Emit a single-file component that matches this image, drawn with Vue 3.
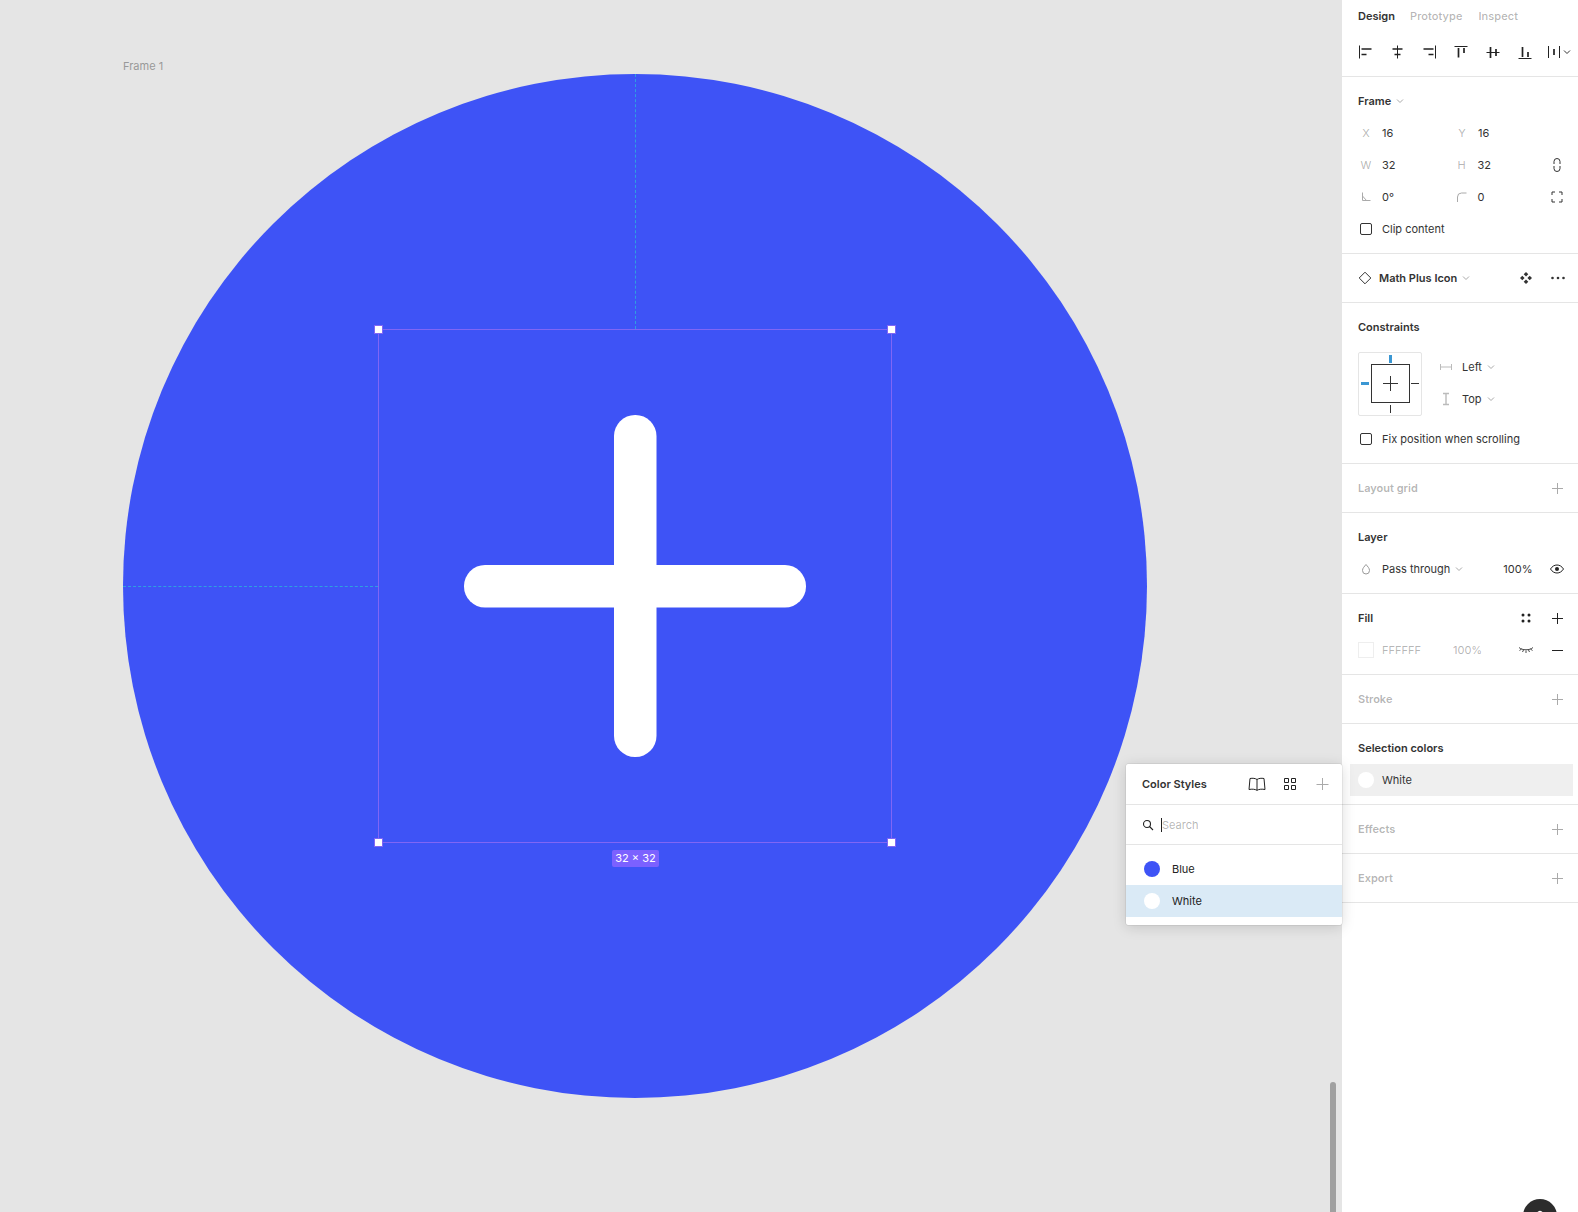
<script setup>
const alignIcons = [
  { line: 'M2.5 1.5v13', bars: 'M4.5 5h10M4.5 10.5h5' },
  { line: 'M8.5 1.5v13', bars: 'M3.5 5h10M5.5 10.5h6' },
  { line: 'M14.5 1.5v13', bars: 'M2.5 5h10M7.5 10.5h5' },
  { line: 'M1.5 2.5h13', bars: 'M5.5 4v9.5M11 4v5' },
  { line: 'M1.5 8.5h13', bars: 'M5.5 3v11M11 5v7' },
  { line: 'M1.5 14.5h13', bars: 'M5.5 3v10M11 8v5' },
]

const emptySections = {
  grid: 'Layout grid',
  stroke: 'Stroke',
  effects: 'Effects',
  exportTo: 'Export',
}
</script>

<template>
  <div class="app">
    <main class="canvas">
      <span class="frame-name">Frame 1</span>
      <div class="circle">
        <svg class="plus-art" viewBox="0 0 512 512">
          <rect x="235" y="85" width="42.5" height="342" rx="21" fill="#fff" />
          <rect x="85" y="235" width="342" height="42.5" rx="21" fill="#fff" />
        </svg>
      </div>
      <i class="guide guide-v"></i>
      <i class="guide guide-h"></i>
      <div class="selection">
        <i class="handle tl"></i>
        <i class="handle tr"></i>
        <i class="handle bl"></i>
        <i class="handle br"></i>
        <span class="size-tag">32 × 32</span>
      </div>
      <div class="scrollbar"></div>
    </main>

    <aside class="panel">
      <section class="section head">
        <div class="tabs">
          <span class="tab active">Design</span>
          <span class="tab tab-proto">Prototype</span>
          <span class="tab tab-inspect">Inspect</span>
        </div>
        <div class="align-row">
          <svg v-for="icon in alignIcons" :key="icon.line" class="align-icon" viewBox="0 0 16 16">
            <path :d="icon.line" fill="none" stroke="#222" />
            <path :d="icon.bars" fill="none" stroke="#222" stroke-width="1.7" />
          </svg>
          <svg class="align-last" viewBox="0 0 26 16">
            <path d="M1.5 2v12M12.5 2v12" fill="none" stroke="#222" />
            <path d="M7 5v6" fill="none" stroke="#222" stroke-width="1.7" />
            <path d="M17 6.5l3 3 3-3" fill="none" stroke="#333" />
          </svg>
        </div>
      </section>

      <section class="section">
        <div class="row title-row">
          <span class="title">Frame</span>
          <svg class="chev" viewBox="0 0 8 8"><path d="M1 2.5l3 3 3-3" /></svg>
        </div>
        <div class="row">
          <div class="cell"><span class="lab">X</span><span class="val">16</span></div>
          <div class="cell"><span class="lab">Y</span><span class="val">16</span></div>
        </div>
        <div class="row">
          <div class="cell"><span class="lab">W</span><span class="val">32</span></div>
          <div class="cell"><span class="lab">H</span><span class="val">32</span></div>
          <svg class="end-icon" viewBox="0 0 16 16">
            <path d="M5 7V4.5a3 3 0 0 1 6 0V7M5 9v2.5a3 3 0 0 0 6 0V9" fill="none" stroke="#333" />
          </svg>
        </div>
        <div class="row">
          <div class="cell">
            <span class="lab">
              <svg class="lab-icon" viewBox="0 0 12 12"><path d="M2.5 1.5v8h8M2.5 5l4 4.5" fill="none" stroke="#aaa" /></svg>
            </span>
            <span class="val">0°</span>
          </div>
          <div class="cell">
            <span class="lab">
              <svg class="lab-icon" viewBox="0 0 12 12"><path d="M1.5 11V6a4 4 0 0 1 4-4h5" fill="none" stroke="#aaa" /></svg>
            </span>
            <span class="val">0</span>
          </div>
          <svg class="end-icon" viewBox="0 0 16 16">
            <path d="M3 6V3h3M10 3h3v3M13 10v3h-3M6 13H3v-3" fill="none" stroke="#333" />
          </svg>
        </div>
        <label class="row">
          <i class="check"></i>
          <span class="val">Clip content</span>
        </label>
      </section>

      <section class="section">
        <div class="row">
          <svg class="diamond" viewBox="0 0 14 14">
            <path d="M7 1.2L12.8 7 7 12.8 1.2 7z" fill="none" stroke="#333" />
          </svg>
          <span class="title comp-name">Math Plus Icon</span>
          <svg class="chev" viewBox="0 0 8 8"><path d="M1 2.5l3 3 3-3" /></svg>
          <svg class="comp-actions" viewBox="0 0 16 16" fill="#333">
            <path d="M8 2L10.3 4.3 8 6.6 5.700 4.3zM8 9.400L10.300 11.700 8 14 5.700 11.700zM4.300 5.700L6.600 8 4.300 10.300 2 8zM11.700 5.700L14 8 11.700 10.300 9.400 8z" />
          </svg>
          <svg class="end-icon more" viewBox="0 0 16 16" fill="#333">
            <circle cx="2.5" cy="8" r="1.3" /><circle cx="8" cy="8" r="1.3" /><circle cx="13.5" cy="8" r="1.3" />
          </svg>
        </div>
      </section>

      <section class="section">
        <div class="row"><span class="title">Constraints</span></div>
        <div class="constraints">
          <div class="cons-box">
            <i class="pin pin-top on"></i>
            <i class="pin pin-left on"></i>
            <i class="pin pin-right"></i>
            <i class="pin pin-bottom"></i>
            <div class="cons-inner">
              <svg viewBox="0 0 15 15"><path d="M7.5 0v15M0 7.5h15" stroke="#333" /></svg>
            </div>
          </div>
          <div class="cons-opts">
            <div class="cons-opt">
              <svg class="cons-icon" viewBox="0 0 14 14"><path d="M1.5 4v6M12.5 4v6M2 7h10" fill="none" stroke="#bbb" /></svg>
              <span class="val">Left</span>
              <svg class="chev" viewBox="0 0 8 8"><path d="M1 2.5l3 3 3-3" /></svg>
            </div>
            <div class="cons-opt">
              <svg class="cons-icon" viewBox="0 0 14 14"><path d="M4 1.5h6M4 12.5h6M7 2v10" fill="none" stroke="#bbb" stroke-width="1.4" /></svg>
              <span class="val">Top</span>
              <svg class="chev" viewBox="0 0 8 8"><path d="M1 2.5l3 3 3-3" /></svg>
            </div>
          </div>
        </div>
        <label class="row">
          <i class="check"></i>
          <span class="val">Fix position when scrolling</span>
        </label>
      </section>

      <section class="section">
        <div class="row">
          <span class="title muted">{{ emptySections.grid }}</span>
          <svg class="end-icon" viewBox="0 0 16 16"><path d="M8.5 3v11M3 8.5h11" stroke="#aaa" /></svg>
        </div>
      </section>

      <section class="section">
        <div class="row"><span class="title">Layer</span></div>
        <div class="row">
          <span class="lab">
            <svg class="lab-icon" viewBox="0 0 12 12"><path d="M6 1.5C7.500 3.500 9.500 5 9.500 7.500a3.500 3.500 0 0 1-7 0C2.500 5 4.500 3.500 6 1.500z" fill="none" stroke="#999" /></svg>
          </span>
          <span class="val">Pass through</span>
          <svg class="chev" viewBox="0 0 8 8"><path d="M1 2.5l3 3 3-3" /></svg>
          <span class="val layer-opacity">100%</span>
          <svg class="end-icon" viewBox="0 0 16 16">
            <path d="M1.500 8C3.200 5.300 5.400 4 8 4s4.800 1.300 6.500 4c-1.700 2.700-3.900 4-6.500 4s-4.800-1.300-6.500-4z" fill="none" stroke="#222" />
            <circle cx="8" cy="8" r="2" fill="#222" />
          </svg>
        </div>
      </section>

      <section class="section">
        <div class="row">
          <span class="title">Fill</span>
          <svg class="style-icon" viewBox="0 0 16 16" fill="#222">
            <circle cx="5" cy="5" r="1.5" /><circle cx="11" cy="5" r="1.5" /><circle cx="5" cy="11" r="1.5" /><circle cx="11" cy="11" r="1.5" />
          </svg>
          <svg class="end-icon" viewBox="0 0 16 16"><path d="M8.5 3v11M3 8.5h11" stroke="#222" /></svg>
        </div>
        <div class="row">
          <i class="swatch"></i>
          <span class="val faded">FFFFFF</span>
          <span class="val faded fill-opacity">100%</span>
          <svg class="eye-closed" viewBox="0 0 16 16">
            <path d="M1 5.500C4 8.500 12 8.500 15 5.500M3.500 7l-2 1.500M8 8.500v2.500M12.500 7l2 1.500M5.500 8l-1 2M10.500 8l1 2" fill="none" stroke="#333" stroke-width=".9" />
          </svg>
          <svg class="end-icon" viewBox="0 0 16 16"><path d="M3 8.500h11" stroke="#222" /></svg>
        </div>
      </section>

      <section class="section">
        <div class="row">
          <span class="title muted">{{ emptySections.stroke }}</span>
          <svg class="end-icon" viewBox="0 0 16 16"><path d="M8.5 3v11M3 8.5h11" stroke="#aaa" /></svg>
        </div>
      </section>

      <section class="section">
        <div class="row"><span class="title">Selection colors</span></div>
        <div class="sel-color">
          <i class="dot"></i>
          <span class="val">White</span>
        </div>
      </section>

      <section class="section">
        <div class="row">
          <span class="title muted">{{ emptySections.effects }}</span>
          <svg class="end-icon" viewBox="0 0 16 16"><path d="M8.5 3v11M3 8.5h11" stroke="#aaa" /></svg>
        </div>
      </section>

      <section class="section">
        <div class="row">
          <span class="title muted">{{ emptySections.exportTo }}</span>
          <svg class="end-icon" viewBox="0 0 16 16"><path d="M8.5 3v11M3 8.5h11" stroke="#aaa" /></svg>
        </div>
      </section>
    </aside>

    <div class="styles-pop">
      <header class="pop-head">
        <span class="title">Color Styles</span>
        <svg class="pop-book" viewBox="0 0 18 14">
          <path d="M9 2.500C7.500 1.300 4.500 1 2 1.500L1 12.500c2.800-.6 6-.4 8 .8 2-1.200 5.200-1.400 8-.8L16 1.500C13.500 1 10.500 1.300 9 2.500zM9 2.500v10.800" fill="none" stroke="#222" />
        </svg>
        <svg class="pop-grid" viewBox="0 0 14 14">
          <path d="M1.500 1.500h4v4h-4zM8.500 1.500h4v4h-4zM1.500 8.500h4v4h-4zM8.500 8.500h4v4h-4z" fill="none" stroke="#222" />
        </svg>
        <svg class="pop-add" viewBox="0 0 14 14"><path d="M7.500 1v12M1.500 7.500h12" stroke="#aaa" /></svg>
      </header>
      <div class="pop-search">
        <svg class="search-icon" viewBox="0 0 12 12">
          <circle cx="5" cy="5" r="3.500" fill="none" stroke="#222" stroke-width="1.100" />
          <path d="M7.500 7.500L11 11" stroke="#222" stroke-width="1.100" />
        </svg>
        <i class="caret"></i>
        <span class="search-ph">Search</span>
      </div>
      <div class="pop-list">
        <div class="pop-item">
          <i class="style-dot blue"></i>
          <span>Blue</span>
        </div>
        <div class="pop-item current">
          <i class="style-dot"></i>
          <span>White</span>
        </div>
      </div>
    </div>

    <div class="help">
      <svg viewBox="0 0 34 34"><path d="M14.500 15a2.500 2.500 0 1 1 4.500 1.500" fill="none" stroke="#fff" stroke-width="1.400" /></svg>
    </div>
  </div>
</template>

<style scoped>
.app {
  position: relative;
  display: flex;
  width: 1578px;
  height: 1212px;
  overflow: hidden;
  font-family: Inter, "Liberation Sans", sans-serif;
  font-size: 11px;
  color: #333;
}

i {
  display: block;
  font-style: normal;
}

svg {
  display: block;
  flex: none;
}

.canvas {
  position: relative;
  flex: 1;
  background: #e5e5e5;
}

.frame-name {
  position: absolute;
  left: 123px;
  top: 59px;
  color: #999;
  line-height: 14px;
}

.circle {
  position: absolute;
  left: 123px;
  top: 74px;
  width: 1024px;
  height: 1024px;
  border-radius: 50%;
  background: #3e53f6;
}

.plus-art {
  position: absolute;
  left: 256px;
  top: 256px;
  width: 512px;
  height: 512px;
}

.guide {
  position: absolute;
}

.guide-v {
  left: 635px;
  top: 74px;
  height: 255px;
  border-left: 1px dashed #2f9fe0;
}

.guide-h {
  left: 123px;
  top: 586px;
  width: 255px;
  border-top: 1px dashed #2f9fe0;
}

.selection {
  position: absolute;
  left: 378px;
  top: 329px;
  width: 512px;
  height: 512px;
  border: 1px solid #8066f5;
}

.handle {
  position: absolute;
  width: 9px;
  height: 9px;
  background: #fff;
  border: 1px solid #8066f5;
  box-sizing: border-box;
}

.tl { left: -5px; top: -5px; }
.tr { right: -5px; top: -5px; }
.bl { left: -5px; bottom: -5px; }
.br { right: -5px; bottom: -5px; }

.size-tag {
  position: absolute;
  left: 233px;
  top: 520px;
  width: 47px;
  height: 17px;
  border-radius: 2px;
  background: #7b61ff;
  color: #fff;
  line-height: 17px;
  text-align: center;
  white-space: nowrap;
}

.scrollbar {
  position: absolute;
  right: 6px;
  top: 1082px;
  width: 6px;
  height: 130px;
  border-radius: 3px 3px 0 0;
  background: #a0a0a0;
}

.panel {
  flex: none;
  width: 236px;
  background: #fff;
}

.section {
  padding: 8px 0;
  border-bottom: 1px solid #e5e5e5;
}

.head {
  height: 76px;
  padding: 0;
  box-sizing: content-box;
}

.tabs {
  display: flex;
  height: 32px;
  align-items: center;
  padding-left: 16px;
}

.tab {
  color: rgba(0, 0, 0, 0.3);
  font-weight: 500;
  letter-spacing: 0.1px;
}

.tab.active {
  color: #333;
  font-weight: 600;
  letter-spacing: 0;
}

.tab-proto { margin-left: 15px; }
.tab-inspect { margin-left: 16px; }

.align-row {
  display: flex;
  align-items: center;
  height: 32px;
  margin-top: 4px;
  padding-left: 15px;
}

.align-icon {
  width: 16px;
  height: 16px;
  margin-right: 16px;
}

.align-last {
  width: 26px;
  height: 16px;
  margin-left: -2px;
}

.row {
  display: flex;
  align-items: center;
  height: 32px;
  padding: 0 13px 0 16px;
}

.title {
  font-weight: 600;
  color: #333;
}

.muted {
  color: rgba(0, 0, 0, 0.3);
}

.chev {
  width: 8px;
  height: 8px;
  margin-left: 5px;
}

.chev path {
  fill: none;
  stroke: #aaa;
}

.cell {
  display: flex;
  align-items: center;
  width: 96px;
}

.lab {
  display: flex;
  justify-content: center;
  width: 16px;
  margin-right: 8px;
  color: rgba(0, 0, 0, 0.3);
}

.lab-icon {
  width: 12px;
  height: 12px;
}

.val {
  color: #333;
}

.faded {
  color: rgba(0, 0, 0, 0.3);
}

.end-icon {
  width: 16px;
  height: 16px;
  margin-left: auto;
}

.check {
  width: 12px;
  height: 12px;
  margin: 0 10px 0 2px;
  border: 1px solid #333;
  border-radius: 2px;
  box-sizing: border-box;
}

.diamond {
  width: 14px;
  height: 14px;
  margin-right: 7px;
}

.comp-actions {
  width: 16px;
  height: 16px;
  margin-left: 48px;
}

.more {
  margin-right: -1px;
}

.constraints {
  display: flex;
  height: 64px;
  margin: 8px 0;
  padding-left: 16px;
}

.cons-box {
  position: relative;
  width: 64px;
  height: 64px;
  margin-top: 1px;
  border: 1px solid #e5e5e5;
  border-radius: 2px;
  box-sizing: border-box;
}

.cons-inner {
  position: absolute;
  left: 12px;
  top: 11px;
  display: flex;
  align-items: center;
  justify-content: center;
  width: 39px;
  height: 39px;
  border: 1px solid #333;
  box-sizing: border-box;
}

.cons-inner svg {
  width: 15px;
  height: 15px;
}

.pin {
  position: absolute;
  background: #333;
}

.pin.on {
  background: #3b97d3;
}

.pin-top { left: 30px; top: 2px; width: 3px; height: 8px; }
.pin-left { left: 2px; top: 29px; width: 8px; height: 3px; }
.pin-right { right: 2px; top: 30px; width: 8px; height: 1px; }
.pin-bottom { bottom: 2px; left: 31px; width: 1px; height: 8px; }

.cons-opts {
  margin-left: 17px;
}

.cons-opt {
  display: flex;
  align-items: center;
  height: 32px;
}

.cons-icon {
  width: 14px;
  height: 14px;
  margin-right: 9px;
}

.layer-opacity {
  margin-left: 40px;
}

.style-icon,
.eye-closed {
  width: 16px;
  height: 16px;
  margin-left: auto;
  margin-right: 15px;
}

.style-icon + .end-icon,
.eye-closed + .end-icon {
  margin-left: 0;
}

.swatch {
  width: 16px;
  height: 16px;
  margin-right: 8px;
  border: 1px solid #eee;
  box-sizing: border-box;
}

.fill-opacity {
  margin-left: 32px;
}

.sel-color {
  display: flex;
  align-items: center;
  height: 32px;
  margin: 0 5px 0 8px;
  padding-left: 8px;
  background: #efefef;
}

.dot {
  width: 16px;
  height: 16px;
  margin-right: 8px;
  border-radius: 50%;
  background: #fff;
}

.styles-pop {
  position: absolute;
  left: 1126px;
  top: 764px;
  width: 216px;
  height: 161px;
  background: #fff;
  border-radius: 2px;
  box-shadow: 0 2px 14px rgba(0, 0, 0, 0.15), 0 0 0 0.5px rgba(0, 0, 0, 0.1);
}

.pop-head {
  display: flex;
  align-items: center;
  height: 41px;
  padding-left: 16px;
  border-bottom: 1px solid #e5e5e5;
  box-sizing: border-box;
}

.pop-book {
  width: 18px;
  height: 14px;
  margin-left: 41px;
}

.pop-grid {
  width: 14px;
  height: 14px;
  margin-left: 17px;
}

.pop-add {
  width: 14px;
  height: 14px;
  margin-left: 18px;
}

.pop-search {
  display: flex;
  align-items: center;
  height: 40px;
  padding-left: 16px;
  border-bottom: 1px solid #e5e5e5;
  box-sizing: border-box;
}

.search-icon {
  width: 12px;
  height: 12px;
  margin-right: 7px;
}

.caret {
  width: 1px;
  height: 14px;
  background: #222;
}

.search-ph {
  color: rgba(0, 0, 0, 0.3);
}

.pop-list {
  padding-top: 8px;
}

.pop-item {
  display: flex;
  align-items: center;
  height: 32px;
  padding-left: 18px;
  color: #222;
}

.pop-item.current {
  background: #daeaf6;
}

.style-dot {
  width: 16px;
  height: 16px;
  margin-right: 12px;
  border-radius: 50%;
  background: #fff;
}

.style-dot.blue {
  background: #3e53f6;
}

.help {
  position: absolute;
  left: 1523px;
  top: 1199px;
  width: 34px;
  height: 34px;
  border-radius: 50%;
  background: #2c2c2c;
}
</style>

<style>
html,
body {
  margin: 0;
  overflow: hidden;
}
</style>
